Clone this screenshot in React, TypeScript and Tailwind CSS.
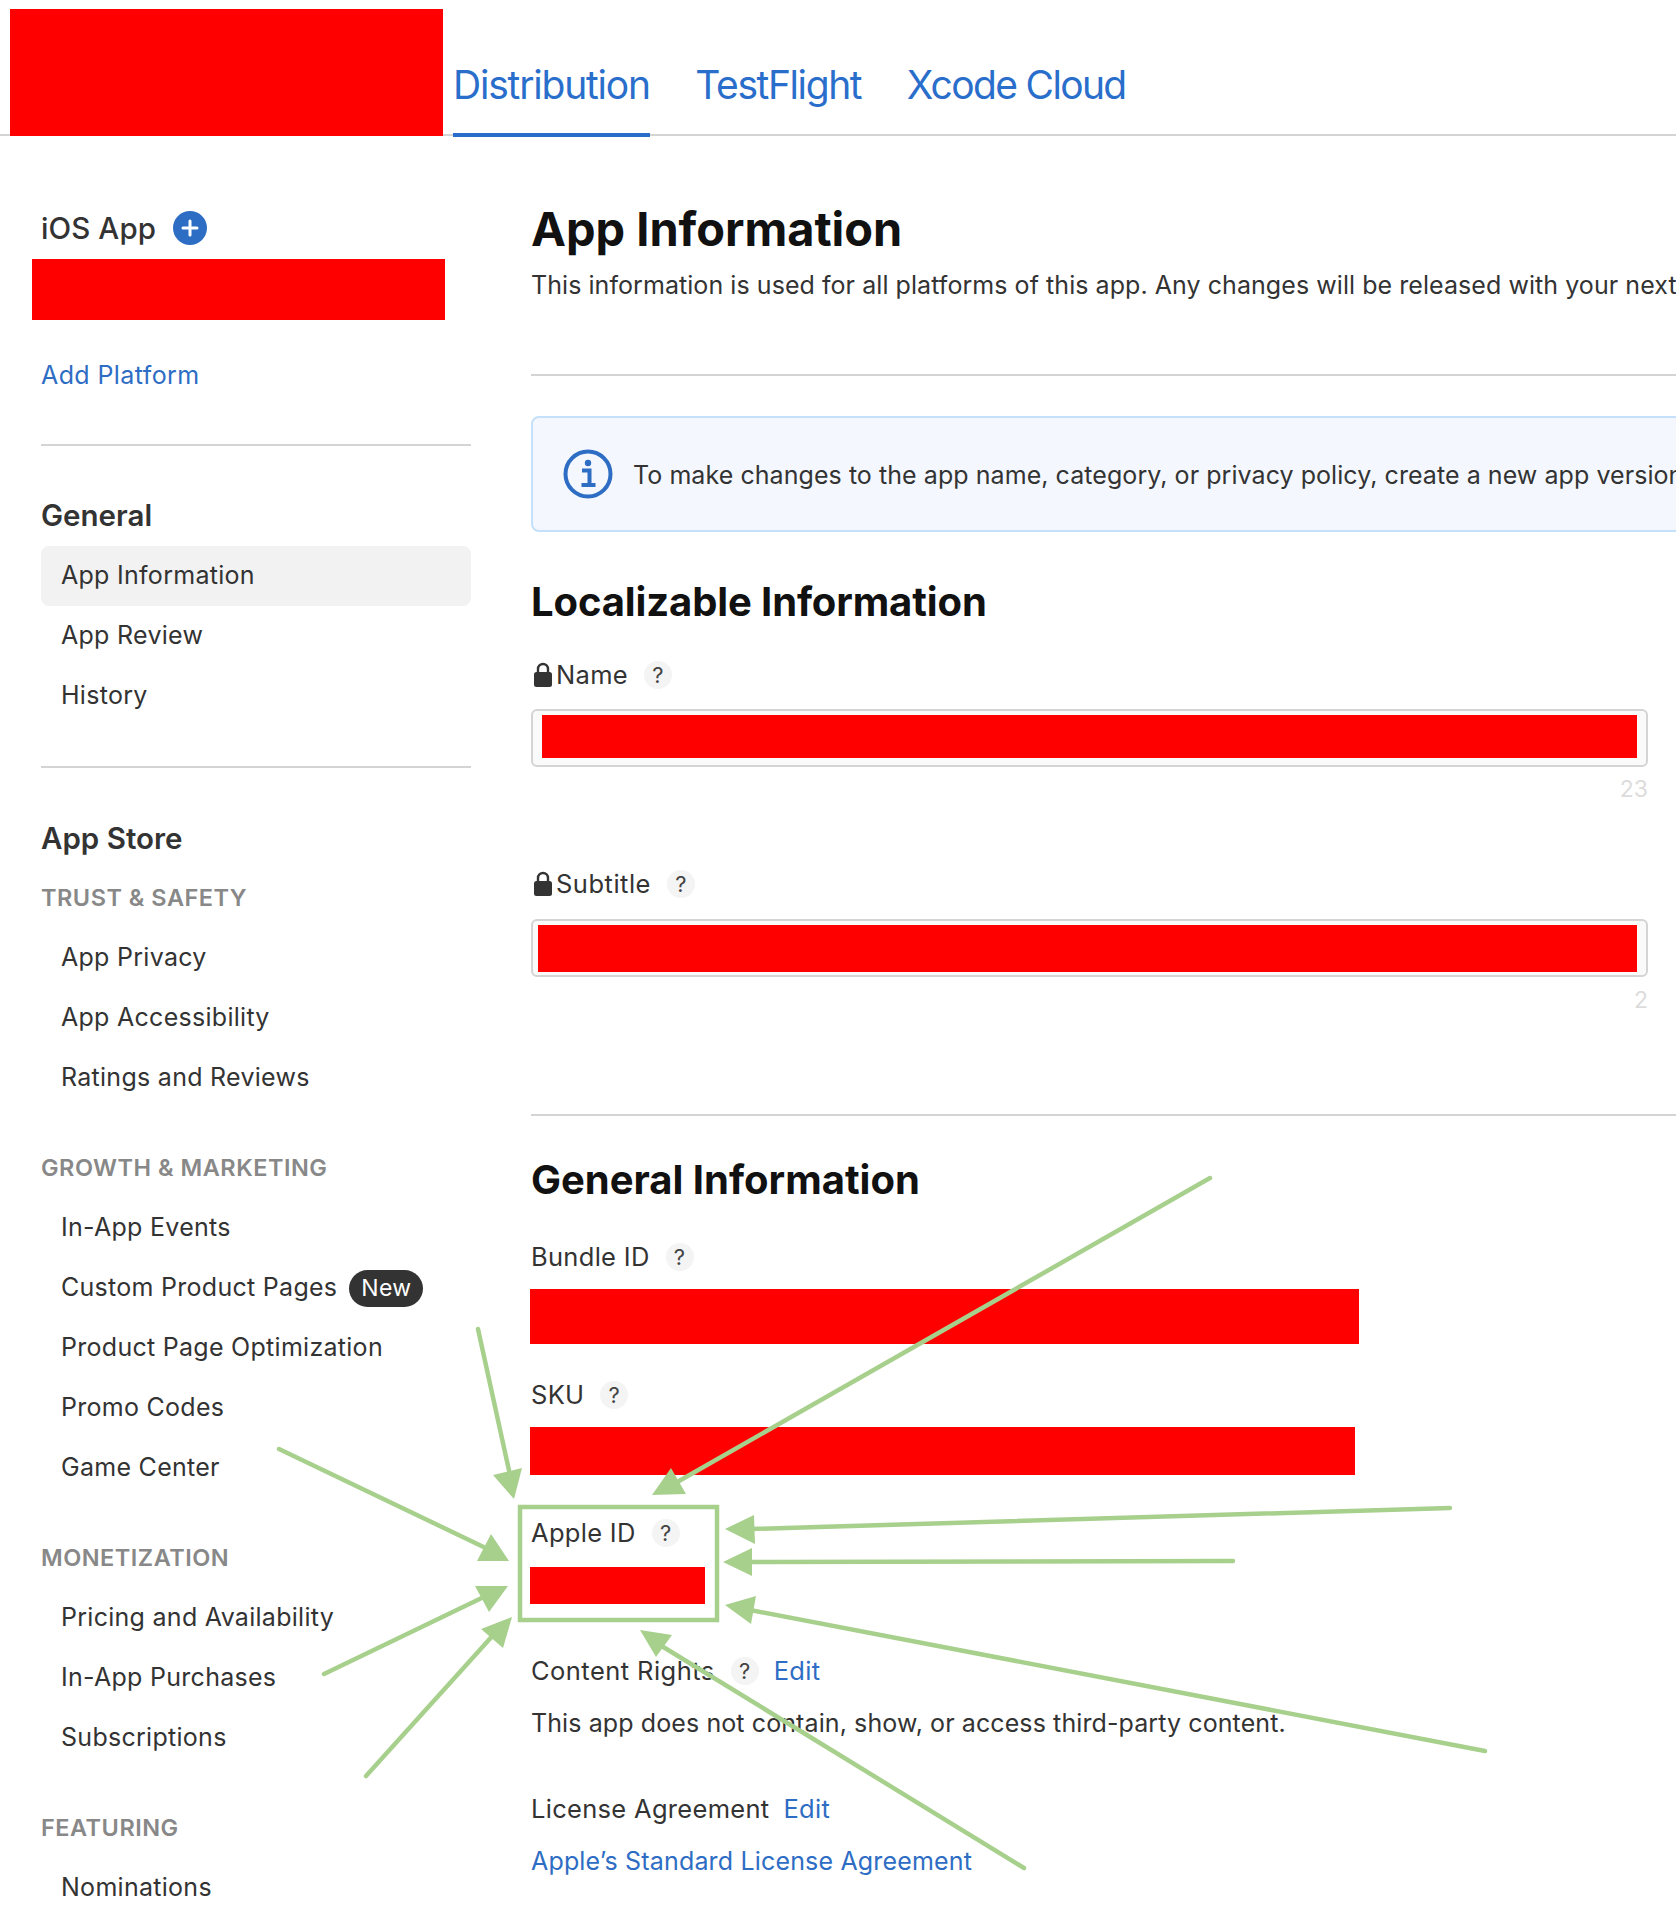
import React from "react";

const font = { fontFamily: "Inter, 'Noto Sans', sans-serif" };

function Lock() {
  return (
    <svg width="18" height="25" viewBox="0 0 18 25" className="-mt-[2px] ml-[3px] shrink-0">
      <path d="M4 11V7a5 5 0 0 1 10 0v4" fill="none" stroke="#333" strokeWidth="2.4" />
      <rect x="0" y="10" width="18" height="15" rx="2.5" fill="#333" />
    </svg>
  );
}

function Help() {
  return (
    <span className="ml-[16px] flex h-[28px] w-[28px] shrink-0 items-center justify-center rounded-full bg-[#f4f4f4] text-[22px] leading-none text-[#444]">
      ?
    </span>
  );
}

function Row({ label, active, badge }: { label: string; active?: boolean; badge?: boolean }) {
  return (
    <div
      className={
        "flex h-[60px] items-center rounded-[8px] pl-[20px] text-[25px] tracking-[0.28px] text-[#333] " +
        (active ? "bg-[#f2f2f2]" : "")
      }
    >
      {label}
      {badge && (
        <span className="ml-[12px] flex h-[37px] w-[74px] items-center justify-center rounded-full bg-[#333] text-[23px] text-white">
          New
        </span>
      )}
    </div>
  );
}

function Caption({ label, className }: { label: string; className: string }) {
  return (
    <div className={"h-[30px] text-[23.5px] font-semibold leading-[30px] tracking-[0.5px] text-[#888] " + className}>
      {label}
    </div>
  );
}

function Heading({ label, className }: { label: string; className: string }) {
  return <div className={"h-[36px] text-[29.5px] font-semibold leading-[36px] text-[#333] " + className}>{label}</div>;
}

function Label({ children, className }: { children: React.ReactNode; className: string }) {
  return <div className={"flex h-[36px] items-center text-[25.5px] tracking-[0.3px] text-[#333] " + className}>{children}</div>;
}

const arrows: [number, number, number, number, string][] = [
  [1210, 1178, 672, 1485, "652,1495 671,1468 686,1494"],
  [478, 1329, 510, 1475, "514,1499 493,1475 522,1468"],
  [279, 1449, 492, 1551, "509,1561 491,1534 477,1561"],
  [324, 1674, 490, 1594, "508,1586 475,1586 489,1612"],
  [366, 1776, 496, 1632, "512,1617 481,1629 503,1648"],
  [1450, 1508, 750, 1529, "725,1529 754,1515 755,1544"],
  [1233, 1561, 750, 1562, "723,1562 752,1548 752,1576"],
  [1485, 1751, 750, 1610, "725,1605 756,1596 751,1624"],
  [1024, 1868, 660, 1645, "640,1630 672,1635 656,1657"],
];

export default function App() {
  return (
    <div className="relative h-[1932px] w-[1676px] overflow-hidden bg-white" style={font}>
      <header className="flex h-[136px] items-start border-b-2 border-[#d4d4d4]">
        <div className="ml-[10px] mt-[9px] h-[127px] w-[433px] shrink-0 bg-[#ff0000]" />
        <nav className="ml-[10px] flex gap-[45.5px] text-[39px] text-[#2a6ecb]">
          <div className="h-[137px] border-b-[4px] border-[#2a6ecb] pt-[61px] leading-[48px] tracking-[-1.2px]">Distribution</div>
          <div className="pt-[61px] leading-[48px] tracking-[-1.4px]">TestFlight</div>
          <div className="pt-[61px] leading-[48px] tracking-[-1.65px]">Xcode Cloud</div>
        </nav>
      </header>

      <div className="flex">
        <aside className="ml-[41px] w-[430px] shrink-0">
          <div className="mt-[74px] flex h-[36px] items-center text-[29.5px] font-medium tracking-[0.1px] text-[#333]">
            iOS App
            <span className="ml-[17px] flex h-[34px] w-[34px] items-center justify-center rounded-full bg-[#2e6dc4]">
              <svg width="20" height="20" viewBox="0 0 20 20">
                <path d="M10 3v14M3 10h14" stroke="#fff" strokeWidth="3" strokeLinecap="round" />
              </svg>
            </span>
          </div>
          <div className="-ml-[9px] mt-[13px] h-[61px] w-[413px] bg-[#ff0000]" />
          <div className="mt-[37px] h-[36px] text-[25px] leading-[36px] tracking-[0.4px] text-[#2e6dc4]">Add Platform</div>
          <div className="mt-[51px] h-[2px] bg-[#d4d4d4]" />
          <Heading label="General" className="mt-[51px]" />
          <div className="mt-[13px]">
            <Row label="App Information" active />
            <Row label="App Review" />
            <Row label="History" />
          </div>
          <div className="mt-[40px] h-[2px] bg-[#d4d4d4]" />
          <Heading label="App Store" className="mt-[52px]" />
          <Caption label="TRUST & SAFETY" className="mt-[27px]" />
          <div className="mt-[15px]">
            <Row label="App Privacy" />
            <Row label="App Accessibility" />
            <Row label="Ratings and Reviews" />
          </div>
          <Caption label="GROWTH & MARKETING" className="mt-[45px]" />
          <div className="mt-[15px]">
            <Row label="In-App Events" />
            <Row label="Custom Product Pages" badge />
            <Row label="Product Page Optimization" />
            <Row label="Promo Codes" />
            <Row label="Game Center" />
          </div>
          <Caption label="MONETIZATION" className="mt-[45px]" />
          <div className="mt-[15px]">
            <Row label="Pricing and Availability" />
            <Row label="In-App Purchases" />
            <Row label="Subscriptions" />
          </div>
          <Caption label="FEATURING" className="mt-[45px]" />
          <div className="mt-[15px]">
            <Row label="Nominations" />
          </div>
        </aside>

        <main className="ml-[60px] w-[1145px] shrink-0">
          <h1 className="mt-[65px] h-[56px] text-[46.9px] font-bold leading-[56px] text-[#111]">App Information</h1>
          <p className="mt-[10px] h-[36px] whitespace-nowrap text-[25px] leading-[36px] tracking-[0.06px] text-[#333]">
            This information is used for all platforms of this app. Any changes will be released with your next app version.
          </p>
          <div className="mt-[71px] h-[2px] bg-[#d4d4d4]" />
          <div className="mt-[40px] flex h-[116px] w-[1200px] items-center rounded-[8px] border-2 border-[#c5e0fb] bg-[#f4f8fe] pl-[30px]">
            <svg width="50" height="50" viewBox="0 0 50 50" className="shrink-0">
              <circle cx="25" cy="25" r="22.5" fill="none" stroke="#2e6dc4" strokeWidth="4" />
              <circle cx="25" cy="14" r="3.2" fill="#2e6dc4" />
              <path d="M19 21.5h7.5v13.5M18.5 36h14" fill="none" stroke="#2e6dc4" strokeWidth="4" />
            </svg>
            <span className="ml-[20px] mt-[4px] whitespace-nowrap text-[25px] tracking-[0.06px] text-[#333]">
              To make changes to the app name, category, or privacy policy, create a new app version.
            </span>
          </div>
          <h2 className="mt-[48px] h-[44px] text-[40px] font-bold leading-[44px] tracking-[-0.12px] text-[#111]">Localizable Information</h2>
          <Label className="mt-[34px] pb-[2px]">
            <Lock />
            <span className="ml-[4px]">Name</span>
            <Help />
          </Label>
          <div className="mt-[15px] h-[58px] w-[1117px] rounded-[6px] border-2 border-[#d4d4d4] bg-[#fafafa] pl-[9px] pr-[9px] pt-[4px]">
            <div className="h-[43px] bg-[#ff0000]" />
          </div>
          <div className="mt-[10px] h-[24px] w-[1117px] text-right text-[23px] leading-[24px] text-[#dcdcdc]">23</div>
          <Label className="mt-[66px] pb-[2px]">
            <Lock />
            <span className="ml-[4px] tracking-[0.5px]">Subtitle</span>
            <Help />
          </Label>
          <div className="mt-[16px] h-[58px] w-[1117px] rounded-[6px] border-2 border-[#d4d4d4] bg-[#fafafa] pl-[5px] pr-[9px] pt-[4px]">
            <div className="h-[47px] bg-[#ff0000]" />
          </div>
          <div className="mt-[11px] h-[24px] w-[1117px] text-right text-[23px] leading-[24px] text-[#dcdcdc]">2</div>
          <div className="mt-[102px] h-[2px] bg-[#d4d4d4]" />
          <h2 className="mt-[42px] h-[44px] text-[40px] font-bold leading-[44px] text-[#111]">General Information</h2>
          <Label className="mt-[37px]">
            Bundle ID
            <Help />
          </Label>
          <div className="-ml-[1px] mt-[14px] h-[55px] w-[829px] bg-[#ff0000]" />
          <Label className="mt-[33px]">
            SKU
            <Help />
          </Label>
          <div className="-ml-[1px] mt-[14px] h-[48px] w-[825px] bg-[#ff0000]" />
          <Label className="mt-[41px] pb-[2px]">
            Apple ID
            <Help />
          </Label>
          <div className="-ml-[1px] mt-[15px] h-[37px] w-[175px] bg-[#ff0000]" />
          <Label className="mt-[49px]">
            <span className="tracking-[0.45px]">Content Rights</span>
            <Help />
            <span className="ml-[15px] text-[#2e6dc4]">Edit</span>
          </Label>
          <p className="mt-[16px] h-[36px] whitespace-nowrap text-[25px] leading-[36px] tracking-[0.1px] text-[#333]">
            This app does not contain, show, or access third-party content.
          </p>
          <Label className="mt-[50px]">
            License Agreement
            <span className="ml-[14px] text-[#2e6dc4]">Edit</span>
          </Label>
          <p className="mt-[16px] h-[36px] whitespace-nowrap text-[25px] leading-[36px] tracking-[0.17px] text-[#2e6dc4]">
            Apple’s Standard License Agreement
          </p>
        </main>
      </div>

      <svg className="absolute left-0 top-0" width="1676" height="1932" viewBox="0 0 1676 1932">
        <rect x="520" y="1507" width="197" height="113" fill="none" stroke="#a8d08d" strokeWidth="4.5" />
        {arrows.map(([x1, y1, x2, y2, head], i) => (
          <g key={i}>
            <line x1={x1} y1={y1} x2={x2} y2={y2} stroke="#a8d08d" strokeWidth="4.5" strokeLinecap="round" />
            <polygon points={head} fill="#a8d08d" />
          </g>
        ))}
      </svg>
    </div>
  );
}
